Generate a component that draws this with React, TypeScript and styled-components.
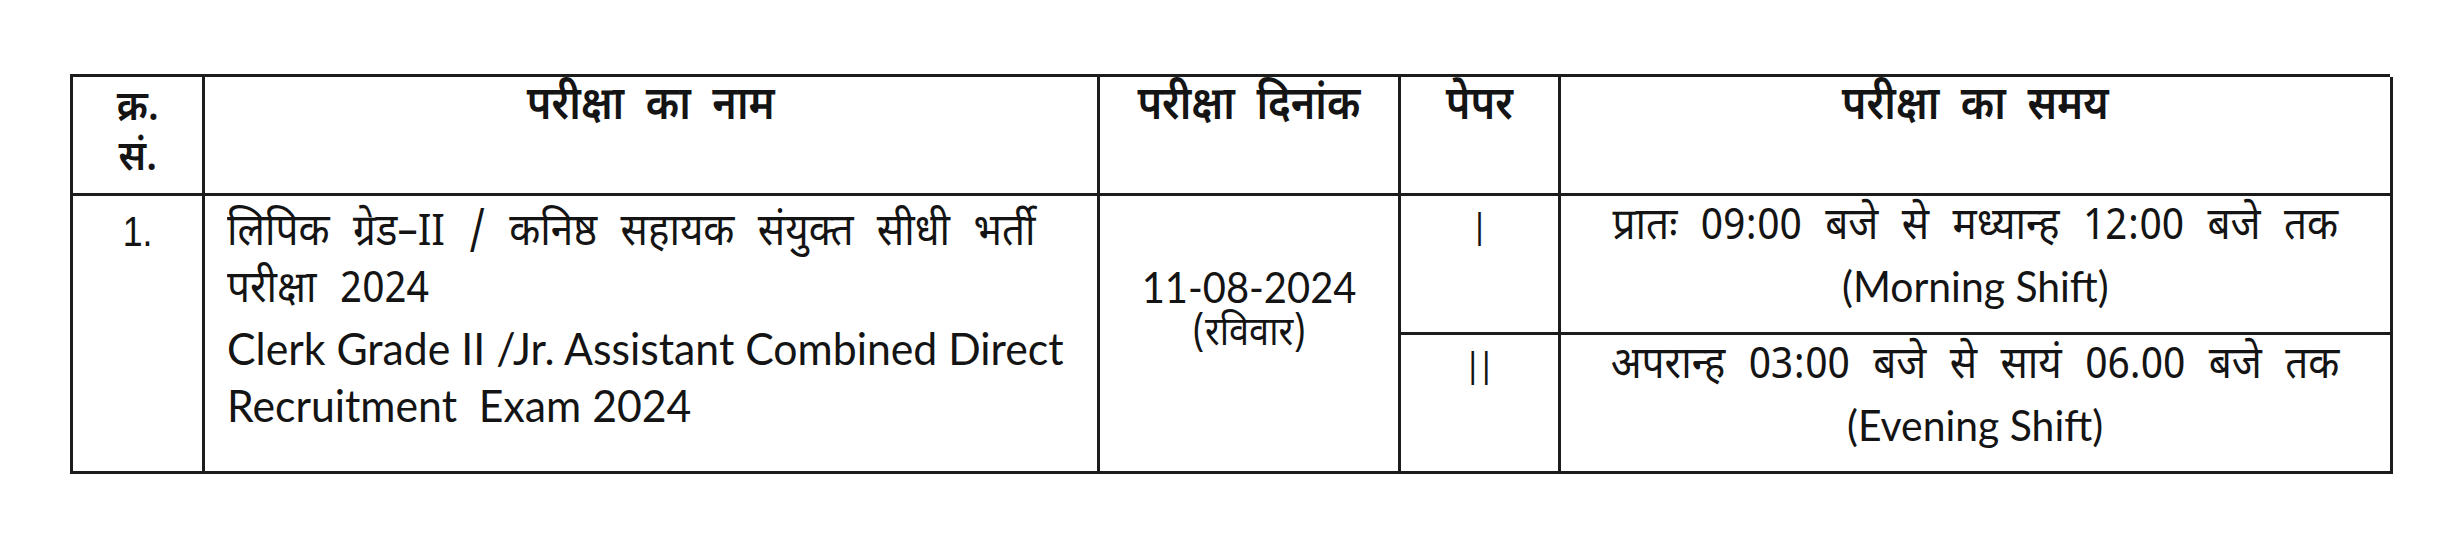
import React from "react";
import styled, { createGlobalStyle } from "styled-components";

const GlobalStyle = createGlobalStyle`
    html, body {
        margin: 0;
        padding: 0;
        background: #ffffff;
    }
    body {
        font-family: "Noto Sans Devanagari", "Lohit Devanagari", "Noto Sans", sans-serif;
        color: #141414;
    }
`;

const Page = styled.div`
    width: 2456px;
    height: 534px;
    padding: 74px 0 0 70px;
    box-sizing: border-box;
`;

const Table = styled.div`
    display: grid;
    grid-template-columns: 132px 895px 301px 160px 832px;
    grid-template-rows: 119px 139px 139px;
    width: 2320px;
    border-top: 3px solid #1c1c1c;
    border-left: 3px solid #1c1c1c;
    box-sizing: border-box;
`;

type CellProps = {
    $align?: "left" | "center";
    $valign?: "start" | "center";
    $rows?: number;
};

const Cell = styled.div<CellProps>`
    grid-row: span ${(p) => p.$rows || 1};
    border-right: 3px solid #1c1c1c;
    border-bottom: 3px solid #1c1c1c;
    display: flex;
    flex-direction: column;
    align-items: ${(p) => (p.$align === "left" ? "flex-start" : "center")};
    justify-content: ${(p) => (p.$valign === "center" ? "center" : "flex-start")};
    text-align: ${(p) => p.$align || "center"};
    box-sizing: border-box;
    overflow: hidden;
`;

const HeadText = styled.div`
    font-size: 46px;
    font-weight: 600;
    line-height: 54px;
    padding-top: 4px;
    word-spacing: 12px;
    white-space: nowrap;
    transform: scaleX(0.9);
`;

const SerialHead = styled.div`
    display: flex;
    flex-direction: column;
    padding-top: 8px;
    font-size: 42px;
    font-weight: 600;
    line-height: 50px;
    transform: scaleX(0.92);
`;

const HindiLine = styled.div`
    font-size: 44px;
    line-height: 57px;
    word-spacing: 14px;
    transform: scaleX(0.92);
    transform-origin: left center;
    white-space: nowrap;
`;

const CenterHindi = styled(HindiLine)`
    transform-origin: center center;
`;

const EnglishLine = styled.div`
    font-family: "Lato", "Open Sans", sans-serif;
    font-size: 45px;
    line-height: 57px;
    white-space: nowrap;
    transform: scaleX(0.95);
    transform-origin: left center;
`;

const CenterEnglish = styled(EnglishLine)`
    font-size: 43px;
    transform-origin: center center;
`;

const NameBlock = styled.div`
    padding: 10px 0 0 22px;
`;

const Serial = styled.div`
    font-family: "Liberation Sans", sans-serif;
    font-size: 42px;
    line-height: 48px;
    padding-top: 12px;
    transform: scaleX(0.85);
`;

const Roman = styled.div`
    font-family: "Lato", "Liberation Sans", sans-serif;
    font-weight: 300;
    font-size: 48px;
    line-height: 52px;
    padding-top: 6px;
    letter-spacing: 1px;
    padding-left: 1px;
`;

const DateText = styled.div`
    font-family: "Lato", "Open Sans", sans-serif;
    font-size: 42px;
    line-height: 48px;
    margin-top: -46px;
    transform: scaleX(0.95);
`;

const DayText = styled.div`
    font-size: 40px;
    line-height: 48px;
    transform: scaleX(0.9);
`;

const TimeBlock = styled.div`
    padding-top: 4px;
`;

export default function App() {
    return (
        <>
            <GlobalStyle />
            <Page>
                <Table>
                    <Cell>
                        <SerialHead>
                            <span>क्र.</span>
                            <span>सं.</span>
                        </SerialHead>
                    </Cell>
                    <Cell>
                        <HeadText>परीक्षा का नाम</HeadText>
                    </Cell>
                    <Cell>
                        <HeadText>परीक्षा दिनांक</HeadText>
                    </Cell>
                    <Cell>
                        <HeadText>पेपर</HeadText>
                    </Cell>
                    <Cell>
                        <HeadText>परीक्षा का समय</HeadText>
                    </Cell>

                    <Cell $rows={2}>
                        <Serial>1.</Serial>
                    </Cell>
                    <Cell $rows={2} $align="left">
                        <NameBlock>
                            <HindiLine>लिपिक ग्रेड–II / कनिष्ठ सहायक संयुक्त सीधी भर्ती</HindiLine>
                            <HindiLine>परीक्षा 2024</HindiLine>
                            <EnglishLine>Clerk Grade II /Jr. Assistant Combined Direct</EnglishLine>
                            <EnglishLine>Recruitment&nbsp; Exam 2024</EnglishLine>
                        </NameBlock>
                    </Cell>
                    <Cell $rows={2} $valign="center">
                        <DateText>11-08-2024</DateText>
                        <DayText>(रविवार)</DayText>
                    </Cell>
                    <Cell>
                        <Roman>I</Roman>
                    </Cell>
                    <Cell>
                        <TimeBlock>
                            <CenterHindi>प्रातः 09:00 बजे से मध्यान्ह 12:00 बजे तक</CenterHindi>
                            <CenterEnglish>(Morning Shift)</CenterEnglish>
                        </TimeBlock>
                    </Cell>
                    <Cell>
                        <Roman>II</Roman>
                    </Cell>
                    <Cell>
                        <TimeBlock>
                            <CenterHindi>अपरान्ह 03:00 बजे से सायं 06.00 बजे तक</CenterHindi>
                            <CenterEnglish>(Evening Shift)</CenterEnglish>
                        </TimeBlock>
                    </Cell>
                </Table>
            </Page>
        </>
    );
}
